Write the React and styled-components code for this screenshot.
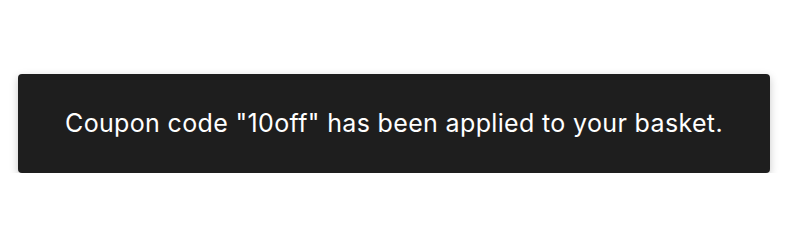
import React from 'react';
import styled, { createGlobalStyle } from 'styled-components';

const GlobalStyle = createGlobalStyle`
  html, body {
    margin: 0;
    padding: 0;
    background: #ffffff;
  }
`;

const Page = styled.div`
  padding: 74px 28px 0 18px;
`;

const Notice = styled.div`
  background: #1e1e1e;
  color: #ffffff;
  border-radius: 4px;
  box-shadow: 0 3px 8px rgba(0, 0, 0, 0.22);
  height: 99px;
  display: flex;
  align-items: center;
  justify-content: center;
`;

const NoticeText = styled.p`
  margin: 0;
  font-family: Inter, "Liberation Sans", Arial, sans-serif;
  font-size: 25px;
  letter-spacing: 0.35px;
  line-height: 1.3;
`;

function App() {
  return (
    <>
      <GlobalStyle />
      <Page>
        <Notice>
          <NoticeText>Coupon code "10off" has been applied to your basket.</NoticeText>
        </Notice>
      </Page>
    </>
  );
}

export default App;
